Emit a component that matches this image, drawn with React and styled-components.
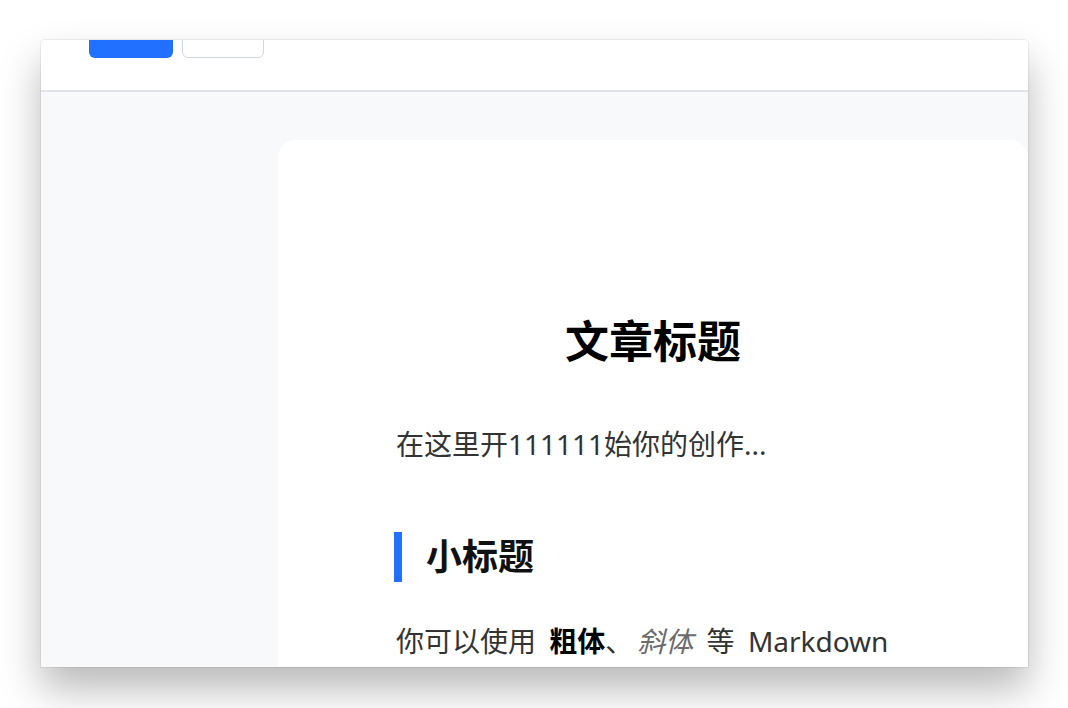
import styled, { createGlobalStyle } from "styled-components";

const GlobalStyle = createGlobalStyle`
  html, body {
    margin: 0;
    padding: 0;
    background: #ffffff;
  }
  body {
    font-family: "Noto Sans", "Noto Sans CJK SC", sans-serif;
  }
`;

export default function App() {
  return (
    <Page>
      <GlobalStyle />
      <Window>
        <Toolbar>
          <Button primary />
          <Button />
        </Toolbar>
        <Main>
          <Side />
          <Card>
            <Title>文章标题</Title>
            <Para>在这里开111111始你的创作...</Para>
            <SubTitle>小标题</SubTitle>
            <Para>
              你可以使用 <strong>粗体</strong>、<em>斜体</em> 等 Markdown
            </Para>
          </Card>
        </Main>
      </Window>
    </Page>
  );
}

const Page = styled.div`
  padding: 40px 40px 41px 41px;
  height: 708px;
  box-sizing: border-box;
`;

const Window = styled.div`
  width: 987px;
  height: 627px;
  display: flex;
  flex-direction: column;
  overflow: hidden;
  border-radius: 4px 4px 0 0;
  background: #f8f9fb;
  box-shadow: 0 22px 40px rgba(0, 0, 0, 0.28), 0 0 0 1px rgba(0, 0, 0, 0.06);
`;

const Toolbar = styled.div`
  flex: none;
  height: 50px;
  display: flex;
  align-items: flex-start;
  gap: 9px;
  padding-left: 48px;
  background: #ffffff;
  border-bottom: 2px solid #e1e3ea;
`;

const Button = styled.button`
  margin-top: -18px;
  width: ${(p) => (p.primary ? "84px" : "82px")};
  height: 36px;
  border-radius: 6px;
  border: ${(p) => (p.primary ? "none" : "1.5px solid #d0d7e0")};
  background: ${(p) => (p.primary ? "#2170ff" : "#ffffff")};
`;

const Main = styled.div`
  flex: 1;
  display: flex;
  min-height: 0;
`;

const Side = styled.div`
  flex: none;
  width: 237px;
`;

const Card = styled.div`
  flex: none;
  width: 750px;
  margin-top: 48px;
  box-sizing: border-box;
  padding: 171px 116px 0;
  background: #ffffff;
  border-radius: 18px 18px 0 0;
  font-family: "Noto Sans", "Noto Sans CJK SC", sans-serif;
`;

const Title = styled.h1`
  margin: 0 0 51px;
  font-size: 44px;
  line-height: 60px;
  font-weight: 700;
  text-align: center;
  color: #000000;
`;

const Para = styled.p`
  margin: 0 0 66px;
  padding-left: 2px;
  font-size: 28px;
  line-height: 44px;
  word-spacing: 6px;
  color: #333333;

  strong {
    font-weight: 700;
    color: #000000;
  }
  em {
    font-style: italic;
    color: #6b6b6b;
    padding-left: 4px;
  }
`;

const SubTitle = styled.h2`
  margin: 0 0 37px;
  padding-left: 24px;
  border-left: 8px solid #2170ff;
  font-size: 36px;
  line-height: 50px;
  font-weight: 700;
  color: #111111;
`;
